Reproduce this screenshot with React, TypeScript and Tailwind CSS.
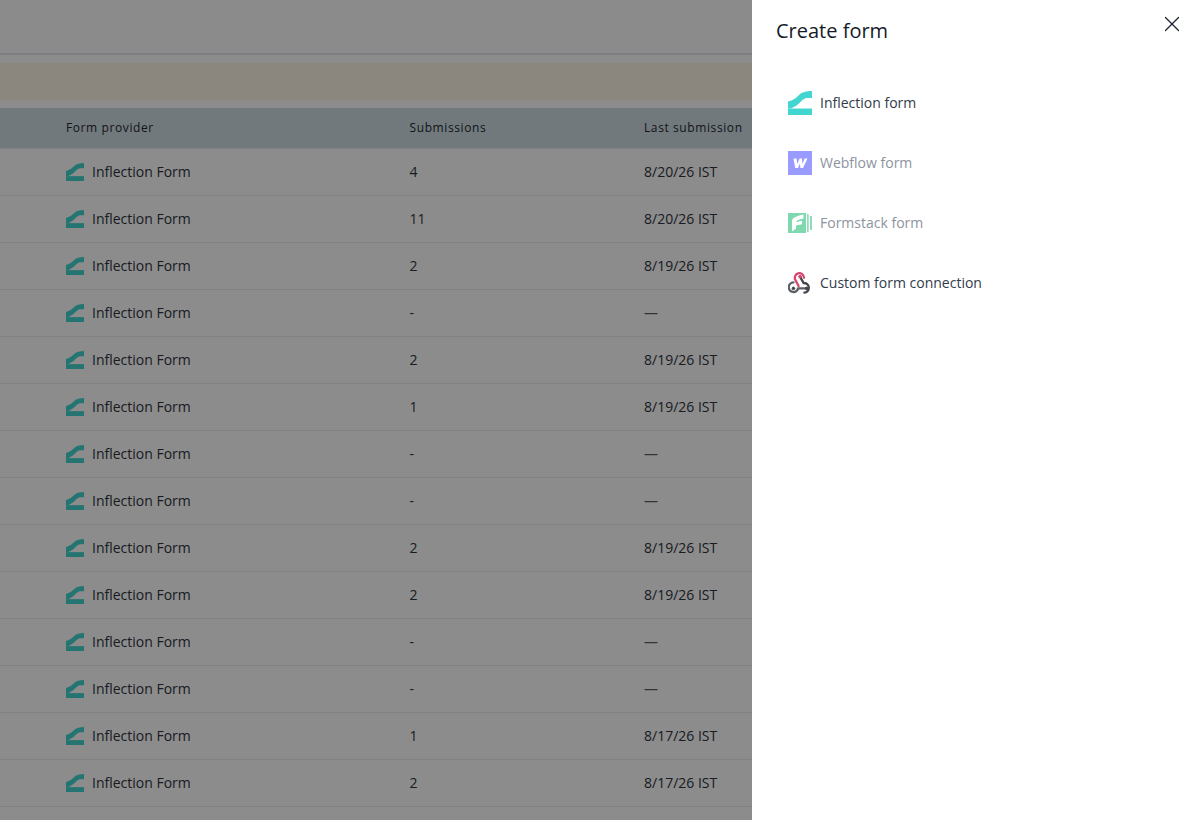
import { X } from "lucide-react"

const ROWS = [
  { submissions: "4", last: "8/20/26 IST" },
  { submissions: "11", last: "8/20/26 IST" },
  { submissions: "2", last: "8/19/26 IST" },
  { submissions: "-", last: "—" },
  { submissions: "2", last: "8/19/26 IST" },
  { submissions: "1", last: "8/19/26 IST" },
  { submissions: "-", last: "—" },
  { submissions: "-", last: "—" },
  { submissions: "2", last: "8/19/26 IST" },
  { submissions: "2", last: "8/19/26 IST" },
  { submissions: "-", last: "—" },
  { submissions: "-", last: "—" },
  { submissions: "1", last: "8/17/26 IST" },
  { submissions: "2", last: "8/17/26 IST" },
]

function InflectionLogo({ className }: { className: string }) {
  return (
    <svg viewBox="0 0 24 24" className={className}>
      <path d="M0 10.5 C5 9.5 8 7 11 4 C14 1 18 0 24 0 V7 H19.5 C16 7 14 9.5 11.5 12 C9 14.5 6 16 3 17.5 H0 Z" fill="#43d6d0" />
      <path d="M0 17.5 H24 V24 H0 Z" fill="#43d6d0" />
    </svg>
  )
}

function WebflowLogo() {
  return (
    <div className="flex h-6 w-6 items-center justify-center bg-[#9a9bff]">
      <svg viewBox="0 0 24 24" className="h-6 w-6">
        <path d="M5.5 7.5 H8.6 L9.3 13 L11.6 7.5 H14 L14.5 13 L16.6 7.5 H19.5 L15 17 H12.4 L11.9 12.6 L10 17 H7.2 Z" fill="#fff" />
      </svg>
    </div>
  )
}

function FormstackLogo() {
  return (
    <svg viewBox="0 0 24 24" className="h-6 w-6">
      <path d="M0 2 H18 V22 H0 Z" fill="#7fd8b0" />
      <path d="M19 3 H20.7 V21 H19 Z M22 5 H24 V19 H22 Z" fill="#8fdcba" />
      <path d="M4 20.5 V10 C4 7 8 5 15.5 3.5 V7.5 C10.5 8.5 8.5 9.5 8 11 L14 9.8 V13.2 L8 14.4 V17.5 Z" fill="#fff" />
    </svg>
  )
}

function WebhookLogo() {
  return (
    <svg viewBox="0 0 24 24" className="h-6 w-6" fill="none" strokeWidth="2.3" strokeLinecap="round">
      <path d="M10.6 15 L7.6 9.4 A4.6 4.6 0 1 1 16 6.8" stroke="#d9476f" />
      <path d="M12 5.6 L15.6 12 A4.8 4.8 0 1 1 16.4 21.6" stroke="#44464d" />
      <path d="M18.6 17.4 H10.2 A4.8 4.8 0 1 1 5.4 11.4" stroke="#5c5e66" />
      <circle cx="12" cy="5.6" r="1.3" fill="#d9476f" stroke="#d9476f" strokeWidth="1" />
      <circle cx="5.4" cy="17.4" r="1.3" fill="#44464d" stroke="#44464d" strokeWidth="1" />
      <circle cx="18.6" cy="17.4" r="1.3" fill="#44464d" stroke="#44464d" strokeWidth="1" />
    </svg>
  )
}

const OPTIONS = [
  { label: "Inflection form", icon: <InflectionLogo className="h-6 w-6" />, disabled: false },
  { label: "Webflow form", icon: <WebflowLogo />, disabled: true },
  { label: "Formstack form", icon: <FormstackLogo />, disabled: true },
  { label: "Custom form connection", icon: <WebhookLogo />, disabled: false },
]

export default function App() {
  return (
    <div className="relative h-[820px] w-full overflow-hidden bg-white font-['Open_Sans',sans-serif]">
      {/* page behind the drawer */}
      <div className="h-[55px] border-b-2 border-[#e2e4e9] bg-[#fdfdff]" />
      <div className="mt-[8px] h-[37px] bg-[#fdf4e5]" />
      <div className="mt-[8px] flex h-[41px] items-center border-b border-[#e9ebee] bg-[#cfdde2] text-xs font-medium tracking-[0.05em] text-[#1f2733]">
        <div className="w-[409.5px] pl-[66px]">Form provider</div>
        <div className="w-[234.5px]">Submissions</div>
        <div>Last submission</div>
      </div>
      {ROWS.map((row, i) => (
        <div key={i} className="flex h-[47px] items-center border-b border-[#e9ebee] pb-px text-sm text-[#2f3540]">
          <div className="flex w-[409.5px] items-center gap-2 pl-[66px]">
            <InflectionLogo className="h-[18px] w-[18px]" />
            <span>Inflection Form</span>
          </div>
          <div className="w-[234.5px]">{row.submissions}</div>
          <div className={row.last === "—" ? "text-[#5a5f6b]" : ""}>{row.last}</div>
        </div>
      ))}

      {/* overlay */}
      <div className="absolute inset-0 bg-black/45" />

      {/* drawer */}
      <aside className="absolute inset-y-0 right-0 w-[445px] bg-white">
        <div className="flex items-start justify-between pl-6 pr-[12px] pt-[17px]">
          <h2 className="text-xl leading-7 font-medium text-[#141b28]">Create form</h2>
          <button className="-mt-[6px] text-[#1a2230]">
            <X className="h-[26px] w-[26px]" strokeWidth={1.2} />
          </button>
        </div>
        <div className="mt-[28px] flex flex-col px-9">
          {OPTIONS.map((opt) => (
            <div key={opt.label} className="flex h-[60px] items-center gap-2">
              {opt.icon}
              <span className={`text-sm font-medium ${opt.disabled ? "text-[#8d939e]" : "text-[#323b4b]"}`}>
                {opt.label}
              </span>
            </div>
          ))}
        </div>
      </aside>
    </div>
  )
}
